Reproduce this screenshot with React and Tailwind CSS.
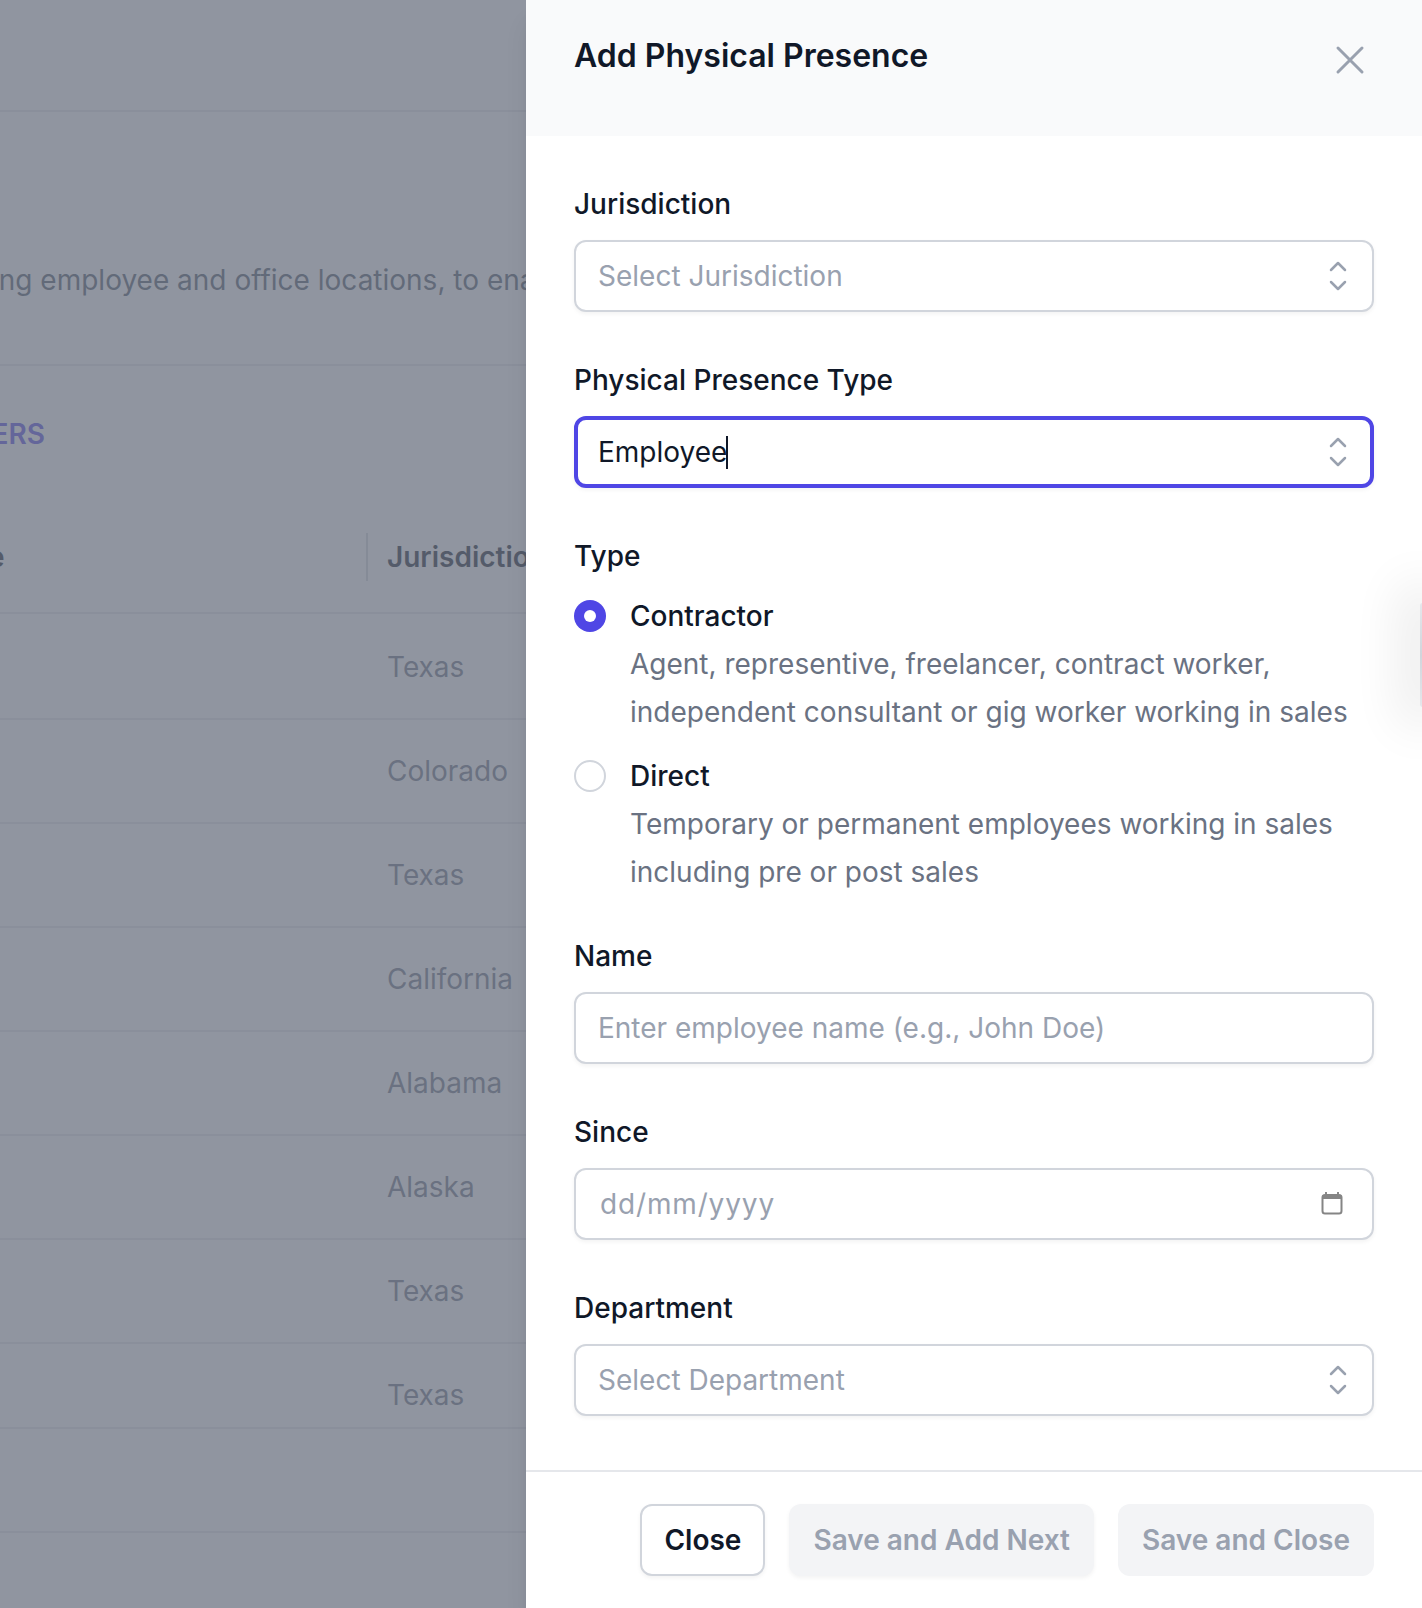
const ChevronsUpDown = () => (
  <svg className="w-12 h-12 text-gray-400 shrink-0" viewBox="0 0 24 24" fill="none" stroke="currentColor" strokeWidth="1.25" strokeLinecap="round" strokeLinejoin="round">
    <path d="M8.5 15 12 18.5 15.5 15m-7-6L12 5.5 15.5 9" />
  </svg>
);

const CalendarGlyph = () => (
  <svg className="w-6 h-6 shrink-0" viewBox="0 0 24 24" fill="none">
    <path d="M6 1v3M18 1v3" stroke="#8a8a8a" strokeWidth="2" />
    <rect x="2.5" y="4" width="19" height="18.5" rx="2.5" stroke="#858585" strokeWidth="2" />
    <rect x="2.5" y="4" width="19" height="4" fill="#858585" />
  </svg>
);

const Label = ({ children }) => (
  <div className="text-[28px] leading-10 font-medium text-gray-900">{children}</div>
);

const Box = ({ children, focused }) => (
  <div
    className={
      focused
        ? "mt-4 h-[72px] flex items-center justify-between bg-white rounded-xl border-4 border-[#4f46e5] pl-5 pr-[8px] shadow-[0_2px_4px_rgba(0,0,0,0.05)]"
        : "mt-4 h-[72px] flex items-center justify-between bg-white rounded-xl border-2 border-gray-300 pl-[22px] pr-[10px] shadow-[0_2px_4px_rgba(0,0,0,0.05)]"
    }
  >
    {children}
  </div>
);

const Placeholder = ({ children }) => (
  <span className="text-[28px] leading-10 text-gray-400">{children}</span>
);

const Radio = ({ checked, title, lines }) => (
  <div className="flex">
    <div className="h-12 flex items-center shrink-0">
      {checked ? (
        <div className="w-8 h-8 rounded-full bg-[#4f46e5] flex items-center justify-center">
          <div className="w-3 h-3 rounded-full bg-white" />
        </div>
      ) : (
        <div className="w-8 h-8 rounded-full border-2 border-gray-300 bg-white" />
      )}
    </div>
    <div className="ml-6">
      <div className="text-[28px] leading-12 font-medium text-gray-900">{title}</div>
      {lines.map((l) => (
        <div key={l} className="text-[28px] leading-12 text-gray-500 whitespace-nowrap">{l}</div>
      ))}
    </div>
  </div>
);

const rows = [
  ["Texas", "h-[106px] pt-[33px]"],
  ["Colorado", "h-[104px] pt-[31px]"],
  ["Texas", "h-[104px] pt-[31px]"],
  ["California", "h-[104px] pt-[31px]"],
  ["Alabama", "h-[104px] pt-[31px]"],
  ["Alaska", "h-[104px] pt-[31px]"],
  ["Texas", "h-[104px] pt-[31px]"],
  ["Texas", "h-[85px] pt-[31px]"],
  ["", "h-[104px]"],
];

export default function App() {
  return (
    <div className="relative w-[1422px] h-[1608px] overflow-hidden bg-white text-gray-900" style={{ fontFamily: "Inter, sans-serif" }}>
      {/* Page behind the dialog */}
      <div className="flex flex-col">
        <div className="h-[112px] border-b-2 border-gray-200" />
        <div className="h-[254px] border-b-2 border-gray-200 pt-[148px] overflow-hidden">
          <p className="text-[28px] leading-10 text-gray-600 whitespace-nowrap -ml-[8px]">ing employee and office locations, to enable</p>
        </div>
        <div className="h-[167px] pt-[48px] overflow-hidden">
          <div className="text-[28px] leading-10 font-semibold text-[#4f46e5] whitespace-nowrap -ml-[27px]">TERS</div>
        </div>
        <div className="h-[81px] border-b-2 border-gray-200 flex items-start overflow-hidden">
          <div className="w-[368px] h-12 border-r-2 border-gray-300 shrink-0 overflow-hidden">
            <div className="text-[28px] leading-10 font-semibold text-gray-900 mt-1 -ml-[12px]">e</div>
          </div>
          <div className="ml-[19px] mt-1 text-[28px] leading-10 font-semibold text-gray-900 whitespace-nowrap">Jurisdiction</div>
        </div>
        {rows.map(([name, cls], i) => (
          <div key={i} className={"border-b-2 border-gray-200 pl-[387px] text-[28px] leading-10 text-gray-500 " + cls}>
            {name}
          </div>
        ))}
      </div>

      {/* Dimming layer */}
      <div className="absolute inset-0 bg-[#6b7280]/75" />

      {/* Slide-over panel */}
      <div className="absolute top-0 right-0 bottom-0 w-[896px] bg-white flex flex-col shadow-xl overflow-hidden">
        <div className="h-[136px] shrink-0 bg-gray-50 pl-12 pr-12 pt-7 flex items-start justify-between">
          <h2 className="text-[32px] leading-14 font-semibold text-gray-900">Add Physical Presence</h2>
          <svg className="w-12 h-12 mt-2 text-gray-400" viewBox="0 0 24 24" fill="none" stroke="currentColor" strokeWidth="1.5" strokeLinecap="round" strokeLinejoin="round">
            <path d="M6 18 18 6M6 6l12 12" />
          </svg>
        </div>

        <div className="flex-1 px-12 pt-12 flex flex-col">
          <Label>Jurisdiction</Label>
          <Box>
            <Placeholder>Select Jurisdiction</Placeholder>
            <ChevronsUpDown />
          </Box>

          <div className="mt-12">
            <Label>Physical Presence Type</Label>
            <Box focused>
              <span className="flex items-center text-[28px] leading-10 text-gray-900">
                Employee
                <span className="w-[2px] h-[33px] bg-gray-900 -ml-[1px]" />
              </span>
              <ChevronsUpDown />
            </Box>
          </div>

          <div className="mt-12">
            <Label>Type</Label>
            <div className="mt-4 flex flex-col gap-4">
              <Radio
                checked
                title="Contractor"
                lines={["Agent, representive, freelancer, contract worker,", "independent consultant or gig worker working in sales"]}
              />
              <Radio
                title="Direct"
                lines={["Temporary or permanent employees working in sales", "including pre or post sales"]}
              />
            </div>
          </div>

          <div className="mt-10">
            <Label>Name</Label>
            <Box>
              <Placeholder>Enter employee name (e.g., John Doe)</Placeholder>
            </Box>
          </div>

          <div className="mt-12">
            <Label>Since</Label>
            <Box>
              <span className="ml-[2px] text-[28px] leading-10 text-gray-400 tracking-[0.85px]">dd/mm/yyyy</span>
              <span className="mr-[18px] -mt-[2px]"><CalendarGlyph /></span>
            </Box>
          </div>

          <div className="mt-12">
            <Label>Department</Label>
            <Box>
              <Placeholder>Select Department</Placeholder>
              <ChevronsUpDown />
            </Box>
          </div>
        </div>

        <div className="h-[138px] shrink-0 border-t-2 border-gray-200 pt-8 pr-12 flex justify-end gap-6">
          <div className="h-[72px] px-[22px] flex items-center rounded-xl border-2 border-gray-300 bg-white text-[28px] font-semibold text-gray-900 shadow-[0_2px_4px_rgba(0,0,0,0.05)]">Close</div>
          <div className="h-[72px] px-6 flex items-center rounded-xl bg-gray-100 text-[28px] font-semibold text-gray-400 shadow-[0_2px_4px_rgba(0,0,0,0.05)]">Save and Add Next</div>
          <div className="h-[72px] px-6 flex items-center rounded-xl bg-gray-100 text-[28px] font-semibold text-gray-400">Save and Close</div>
        </div>

        {/* Sliver of a floating element at the window edge */}
        <div className="absolute right-0 top-[603px] w-[2px] h-[104px] rounded-l-sm bg-gradient-to-b from-gray-200 via-gray-300 to-gray-200 shadow-[0_0_50px_18px_rgba(0,0,0,0.09)]" />
      </div>
    </div>
  );
}
